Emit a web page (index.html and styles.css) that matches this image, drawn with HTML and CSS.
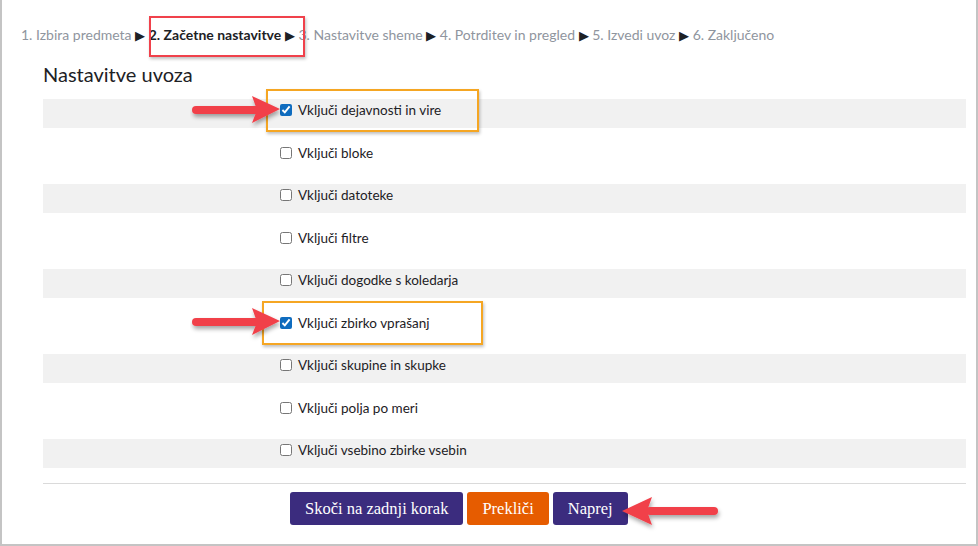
FILE: index.html
```html
<!DOCTYPE html>
<html lang="sl">
<head>
<meta charset="utf-8">
<title>Nastavitve uvoza</title>
<link rel="stylesheet" href="styles.css">
</head>
<body>
<div class="frame">
  <nav class="steps">
    <span class="step">1. Izbira predmeta</span>
    <span class="sep">&#9654;</span>
    <span class="step current">2. Začetne nastavitve</span>
    <span class="sep">&#9654;</span>
    <span class="step">3. Nastavitve sheme</span>
    <span class="sep">&#9654;</span>
    <span class="step">4. Potrditev in pregled</span>
    <span class="sep">&#9654;</span>
    <span class="step">5. Izvedi uvoz</span>
    <span class="sep">&#9654;</span>
    <span class="step">6. Zaključeno</span>
  </nav>
  <h2 class="title">Nastavitve uvoza</h2>
  <div class="rows">
    <label class="row odd"><input type="checkbox" checked><span>Vključi dejavnosti in vire</span></label>
    <label class="row"><input type="checkbox"><span>Vključi bloke</span></label>
    <label class="row odd"><input type="checkbox"><span>Vključi datoteke</span></label>
    <label class="row"><input type="checkbox"><span>Vključi filtre</span></label>
    <label class="row odd"><input type="checkbox"><span>Vključi dogodke s koledarja</span></label>
    <label class="row"><input type="checkbox" checked><span>Vključi zbirko vprašanj</span></label>
    <label class="row odd"><input type="checkbox"><span>Vključi skupine in skupke</span></label>
    <label class="row"><input type="checkbox"><span>Vključi polja po meri</span></label>
    <label class="row odd"><input type="checkbox"><span>Vključi vsebino zbirke vsebin</span></label>
  </div>
  <hr class="divider">
  <div class="actions">
    <button class="btn primary">Skoči na zadnji korak</button>
    <button class="btn danger">Prekliči</button>
    <button class="btn primary">Naprej</button>
  </div>

  <div class="mark mark-step"></div>
  <div class="mark mark-one"></div>
  <div class="mark mark-two"></div>
  <svg class="arrow arrow-one" width="100" height="40" viewBox="0 0 100 40"><g filter="url(#sh)"><line x1="6" y1="18" x2="66" y2="18" stroke="#f1404a" stroke-width="8" stroke-linecap="round"/><polygon points="90,17 62,4 67,18 62,31" fill="#f1404a"/></g><defs><filter id="sh" x="-20%" y="-40%" width="140%" height="190%"><feDropShadow dx="1" dy="3" stdDeviation="2" flood-color="#000" flood-opacity="0.35"/></filter></defs></svg>
  <svg class="arrow arrow-two" width="100" height="40" viewBox="0 0 100 40"><g filter="url(#sh)"><line x1="6" y1="18" x2="66" y2="18" stroke="#f1404a" stroke-width="8" stroke-linecap="round"/><polygon points="90,17 62,4 67,18 62,31" fill="#f1404a"/></g></svg>
  <svg class="arrow arrow-three" width="110" height="40" viewBox="0 0 110 40"><g filter="url(#sh)"><line x1="34" y1="18" x2="98" y2="18" stroke="#f1404a" stroke-width="8" stroke-linecap="round"/><polygon points="6,18 36,4 31,18 36,32" fill="#f1404a"/></g></svg>
</div>
</body>
</html>
```
FILE: styles.css
```css
html, body {
  margin: 0;
  padding: 0;
  background: #fff;
}
.frame {
  position: relative;
  box-sizing: border-box;
  width: 978px;
  height: 546px;
  border: 2px solid #c4c4c4;
  border-top: 0;
  padding: 26px 10px 0 41px;
  font-family: "Lato", "Liberation Sans", sans-serif;
  color: #1d2125;
  overflow: hidden;
}
.steps {
  margin-left: -22px;
  font-size: 14px;
  line-height: 18px;
  color: #8f959e;
  white-space: nowrap;
}
.step.current {
  color: #1d2125;
  font-weight: bold;
}
.sep {
  color: #1d2125;
  font-size: 13px;
}
.title {
  margin: 18px 0 0 0;
  font-size: 20px;
  font-weight: normal;
  line-height: 24px;
  color: #1d2125;
}
.rows {
  margin-top: 13px;
  display: grid;
  grid-auto-rows: 29px;
  row-gap: 13.5px;
}
.row {
  display: flex;
  align-items: flex-start;
  padding: 1px 0 0 237px;
  font-size: 13.5px;
  line-height: 21px;
}
.row.odd {
  background: #f1f1f1;
}
.row input {
  margin: 4px 6px 0 0;
  width: 12px;
  height: 12px;
  accent-color: #0f6cbf;
}
.divider {
  margin: 15px 0 0 0;
  border: 0;
  border-top: 1px solid #dadada;
}
.actions {
  margin-top: 8px;
  display: flex;
  gap: 4px;
  padding-left: 247px;
}
.btn {
  height: 33px;
  border: 0;
  border-radius: 3px;
  padding: 0 15px;
  font-family: "Liberation Serif", serif;
  font-size: 16.5px;
  color: #fff;
}
.btn.primary { background: #3b2c7e; }
.btn.danger { background: #e65c00; }
.mark {
  position: absolute;
  box-sizing: border-box;
  border: 2px solid #f5a623;
  box-shadow: 1px 2px 3px rgba(0,0,0,0.25);
}
.mark-step {
  left: 147px; top: 16px; width: 156px; height: 41px;
  border-color: #f0414b;
}
.mark-one { left: 264px; top: 89px; width: 213px; height: 43px; }
.mark-two { left: 260px; top: 301px; width: 221px; height: 44px; }
.arrow { position: absolute; }
.arrow-one { left: 188px; top: 92px; }
.arrow-two { left: 188px; top: 304px; }
.arrow-three { left: 614px; top: 493px; }
```
